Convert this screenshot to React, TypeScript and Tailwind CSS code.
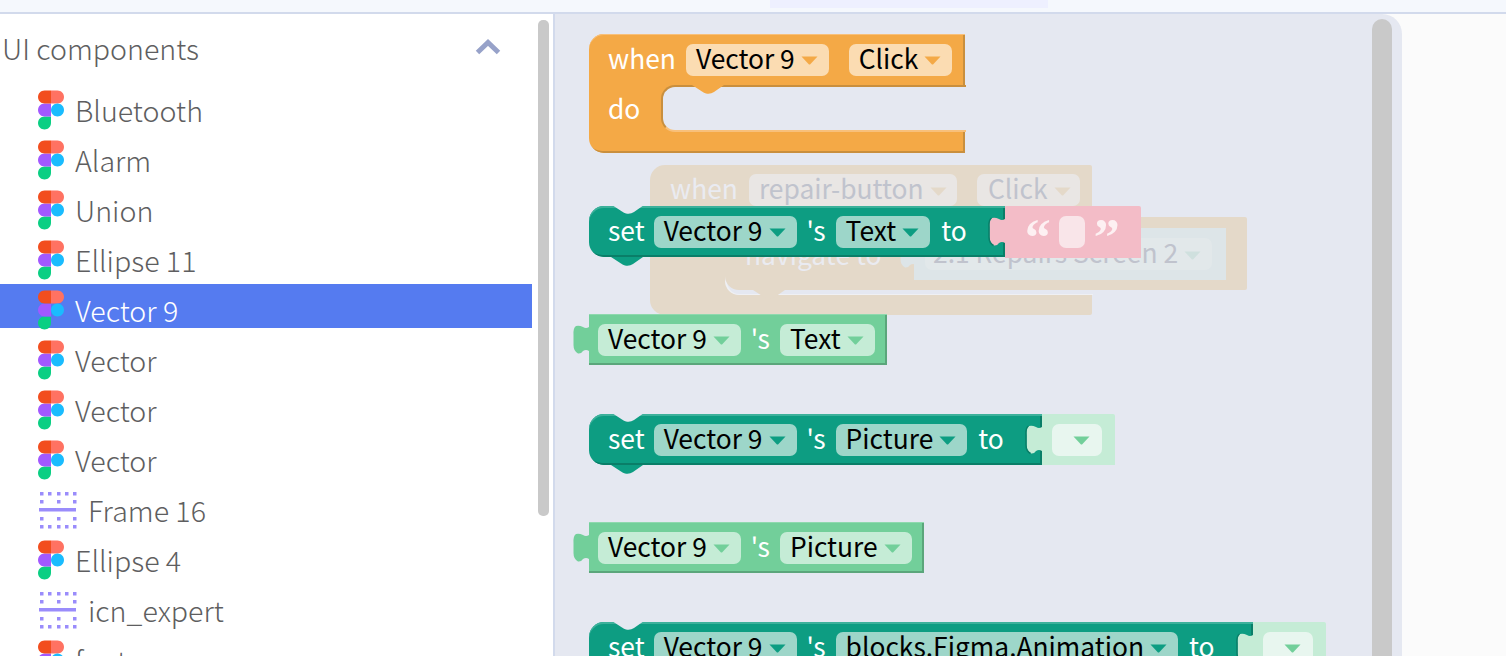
const blockFont = "font-['Noto_Sans_CJK_SC','Noto_Sans',sans-serif]"

type Tone = { base: string; field: string; arrow: string; edge: string }

const ORANGE: Tone = { base: 'bg-[#f4a946]', field: 'bg-[#fbdcb2]', arrow: '#f4a946', edge: 'shadow-[inset_0_1px_0_#f8c07a,inset_-2px_-2px_0_#c98f3e]' }
const TEAL: Tone = { base: 'bg-[#0d9d82]', field: 'bg-[#9dd6c9]', arrow: '#0d9d82', edge: 'shadow-[inset_0_2px_0_#3cb19b,inset_-2px_-2px_0_#0a7e68]' }
const GREEN: Tone = { base: 'bg-[#72cf9a]', field: 'bg-[#c5ecd6]', arrow: '#72cf9a', edge: 'shadow-[inset_0_1px_0_#8ed9ae,inset_-2px_-2px_0_#5ba67b]' }

function FigmaIcon() {
  return (
    <svg width="26" height="40" viewBox="0 0 200 300" className="shrink-0">
      <path d="M50 300c27.6 0 50-22.4 50-50v-50H50c-27.6 0-50 22.4-50 50s22.4 50 50 50z" fill="#0acf83" />
      <path d="M0 150c0-27.6 22.4-50 50-50h50v100H50c-27.6 0-50-22.4-50-50z" fill="#a259ff" />
      <path d="M0 50C0 22.4 22.4 0 50 0h50v100H50C22.4 100 0 77.6 0 50z" fill="#f24e1e" />
      <path d="M100 0h50c27.6 0 50 22.4 50 50s-22.4 50-50 50h-50V0z" fill="#ff7262" />
      <path d="M200 150c0 27.6-22.4 50-50 50s-50-22.4-50-50 22.4-50 50-50 50 22.4 50 50z" fill="#1abcfe" />
    </svg>
  )
}

function FrameIcon() {
  const cols = [1, 9, 18, 26, 34]
  return (
    <svg width="38" height="38" viewBox="0 0 38 38" className="shrink-0" fill="#9a8cfb">
      {[1, 34].map(y => cols.map(x => <rect key={`${x}-${y}`} x={x} y={y} width="3.5" height="3.5" />))}
      {[9, 26].map(y => [1, 18, 34].map(x => <rect key={`${x}-${y}`} x={x} y={y} width="3.5" height="3.5" />))}
      <rect x="0" y="17" width="37" height="3.5" />
    </svg>
  )
}

const items = [
  { name: 'Bluetooth', kind: 'figma' },
  { name: 'Alarm', kind: 'figma' },
  { name: 'Union', kind: 'figma' },
  { name: 'Ellipse 11', kind: 'figma' },
  { name: 'Vector 9', kind: 'figma', selected: true },
  { name: 'Vector', kind: 'figma' },
  { name: 'Vector', kind: 'figma' },
  { name: 'Vector', kind: 'figma' },
  { name: 'Frame 16', kind: 'frame' },
  { name: 'Ellipse 4', kind: 'figma' },
  { name: 'icn_expert', kind: 'frame' },
  { name: 'font', kind: 'figma' },
]

function Row({ name, kind, selected }: { name: string; kind: string; selected?: boolean }) {
  return (
    <li className={`h-[44px] mb-[6px] flex gap-[11px] pl-[38px] ${selected ? 'bg-[#557bf0]' : ''}`}>
      <div className={kind === 'figma' ? 'pt-[6px] h-[46px]' : 'pt-[7px] pl-[1px] h-[46px]'}>
        {kind === 'figma' ? <FigmaIcon /> : <FrameIcon />}
      </div>
      <span className={`pt-[6px] text-[28.6px] leading-[40px] font-light ${selected ? 'text-white' : 'text-[#5e5e60]'}`}>{name}</span>
    </li>
  )
}

function Arrow({ color, className = '' }: { color: string; className?: string }) {
  return (
    <svg width="17" height="9" viewBox="0 0 17 9" className={className}>
      <path d="M0.5 0.5h16l-7 7.5q-1 1-2 0z" fill={color} />
    </svg>
  )
}

function Field({ label, tone, className = '' }: { label: string; tone: Tone; className?: string }) {
  return (
    <div className={`h-[32px] rounded-[7px] flex items-center pl-[10px] pr-[11px] gap-[6px] text-black ${tone.field} ${className}`}>
      <span className="block text-[26.4px] leading-[28px] pb-[4px] whitespace-nowrap">{label}</span>
      <Arrow color={tone.arrow} className="mt-[2px]" />
    </div>
  )
}

function Word({ children, className = '' }: { children: string; className?: string }) {
  return <span className={`block text-[26.4px] leading-[28px] pb-[4px] text-white whitespace-nowrap ${className}`}>{children}</span>
}

// notch cut out of the top of a statement block, tab hanging from the bottom
function Notch({ color, className }: { color: string; className: string }) {
  return (
    <svg width="32" height="10" viewBox="0 0 32 10" className={`absolute ${className}`}>
      <path d="M0 0h32l-10 7q-3.5 2.5-8 1.5q-2-.5-4-2z" fill={color} />
    </svg>
  )
}

// puzzle tab on the left of a value block
function Socket({ color, shade, className }: { color: string; shade?: string; className: string }) {
  return (
    <svg width="18" height="30" viewBox="-1 0 18 30" className={`absolute ${className}`}>
      <path d="M16 2Q13 4 10 2Q6 0 3 1Q0 3 .5 10V20Q.5 26 5 28.5Q8 29 10 26Q13 24 16 26Z" fill={color} />
      {shade && <path d="M3 1Q0 3 .5 10V20Q.5 26 5 28.5" fill="none" stroke={shade} strokeWidth="1.5" transform="translate(-.5 0)" />}
    </svg>
  )
}

function SetBlock({ prop, className, socket }: { prop: string; className: string; socket: 'text' | 'picture' }) {
  return (
    <div className={`absolute flex ${blockFont} ${className}`}>
      <div className={`relative h-[51px] rounded-l-[15px] flex items-center pl-[19px] pr-[38px] gap-[9px] ${TEAL.base} ${TEAL.edge}`}>
        <Word>set</Word>
        <Field label="Vector 9" tone={TEAL} />
        <Word className="ml-[1px]">'s</Word>
        <Field label={prop} tone={TEAL} className="ml-[1px]" />
        <Word className="ml-[2px]">to</Word>
        <Notch color="#e5e8f1" className="left-[23px] -top-[1px]" />
        <Notch color={TEAL.arrow} className="left-[22px] top-[51px]" />
      </div>
      {socket === 'text' ? (
        <div className="relative w-[136px] h-[52px] bg-[#f3bcc7] flex items-start pl-[20px] gap-[9px] rounded-tr-[2px]">
          <span className="mt-[6px] w-[25px] h-[32px] font-['Liberation_Serif',serif] text-[52px] leading-[52px] text-[#fdf0f2] font-bold whitespace-nowrap">“</span>
          <div className="mt-[10px] w-[26px] h-[32px] rounded-[7px] bg-[#f9e5e9]" />
          <span className="mt-[6px] w-[25px] h-[32px] font-['Liberation_Serif',serif] text-[52px] leading-[52px] text-[#fdf0f2] font-bold whitespace-nowrap">”</span>
          <Socket color="#f3bcc7" shade="#0a7e68" className="-left-[17px] top-[11px]" />
        </div>
      ) : (
        <div className="relative w-[73px] h-[51px] bg-[#c5ecd6] flex items-center rounded-tr-[2px] pl-[10px]">
          <div className="w-[50px] h-[32px] rounded-[7px] bg-[#e8f6ef] flex items-center justify-center pl-[10px]">
            <Arrow color={GREEN.arrow} className="mt-[2px]" />
          </div>
          <Socket color="#c5ecd6" shade="#0a7e68" className="-left-[17px] top-[11px]" />
        </div>
      )}
    </div>
  )
}

function GetBlock({ prop, className }: { prop: string; className: string }) {
  return (
    <div className={`absolute h-[51px] flex items-center pl-[9px] pr-[12px] gap-[9px] ${blockFont} ${GREEN.base} ${GREEN.edge} ${className}`}>
      <Field label="Vector 9" tone={GREEN} />
      <Word className="ml-[1px]">'s</Word>
      <Field label={prop} tone={GREEN} className="ml-[1px]" />
      <Socket color="#72cf9a" className="-left-[17px] top-[11px]" />
    </div>
  )
}

function GhostField({ label, arrow, className = '' }: { label: string; arrow: string; className?: string }) {
  return (
    <div className={`h-[32px] rounded-[7px] flex items-center gap-[6px] ${className}`}>
      <span className="block text-[26.4px] leading-[28px] pb-[4px] text-[#c0c3cd] whitespace-nowrap">{label}</span>
      <Arrow color={arrow} className="mt-[2px]" />
    </div>
  )
}

export default function App() {
  return (
    <div className={`h-[656px] w-full overflow-hidden bg-[#fbfbfb] ${blockFont}`}>
      <div className="h-[14px] bg-[#f5f8fd] border-b-2 border-[#d2daec] pl-[770px]">
        <div className="w-[278px] h-[8px] bg-[#eef0ff]" />
      </div>
      <div className="flex h-[642px]">
        <aside className="relative w-[555px] shrink-0 bg-white border-r-2 border-[#d2daec] overflow-hidden">
          <div className="h-[70px] flex items-start pl-[2px] pr-[52px] justify-between">
            <span className="pt-[12px] text-[28.6px] leading-[44px] font-light text-[#5e5e60]">UI components</span>
            <svg width="26" height="16" viewBox="0 0 26 16" className="mt-[25px]">
              <path d="M2.5 13.5L13 3.5L23.5 13.5" fill="none" stroke="#97a2c9" strokeWidth="5" />
            </svg>
          </div>
          <ul className="w-[532px]">
            {items.map((it, i) => <Row key={i} {...it} />)}
          </ul>
          <div className="absolute left-[538px] top-[6px] w-[11px] h-[496px] rounded-[5px] bg-[#c9c9c9]" />
        </aside>

        <main className="relative w-[847px] shrink-0 bg-[#e5e8f1] rounded-tr-[20px] overflow-hidden">
          {/* ghost block being dragged behind the others */}
          <div className="absolute left-[95px] top-[151px] w-[442px] h-[150px] rounded-l-[15px] rounded-r-[2px] bg-[#e4d9c9] flex flex-col">
            <div className="h-[50px] flex items-center pl-[20px] gap-[11px]">
              <span className="block text-[26.4px] leading-[28px] pb-[4px] text-[#eaebf1]">when</span>
              <GhostField label="repair-button" arrow="#e4d9c9" className="bg-[#e9e6e4] pl-[10px] w-[208px]" />
              <GhostField label="Click" arrow="#e4d9c9" className="bg-[#e9e6e4] pl-[11px] w-[103px] ml-[9px]" />
            </div>
            <div className="mt-[2px] h-[78px] ml-[75px] -mr-[1px] bg-[#e5e8f1] rounded-l-[14px] border-b border-l-2 border-[#eff0f4]" />
          </div>
          <div className="absolute left-[170px] top-[203px] w-[522px] h-[73px] rounded-bl-[14px] rounded-r-[2px] bg-[#e4d9c9] flex items-center pl-[20px]">
            <span className="block text-[26.4px] leading-[28px] pb-[4px] text-[#eaebf1] mt-[4px] whitespace-nowrap">navigate to</span>
            <Notch color="#e4d9c9" className="left-[28px] top-[73px]" />
            <Socket color="#dde5e8" className="left-[174px] top-[22px]" />
            <div className="absolute left-[189px] top-[11px] w-[312px] h-[52px] bg-[#dde5e8] flex items-center pl-[11px]">
              <GhostField label="2.1 Repairs Screen 2" arrow="#cfe0de" className="bg-[#e2e8ea] pl-[8px] w-[287px]" />
            </div>
          </div>

          {/* orange event block */}
          <div className={`absolute left-[34px] top-[20px] w-[376px] h-[119px] rounded-l-[15px] flex flex-col ${ORANGE.base} ${ORANGE.edge}`}>
            <div className="h-[51px] flex items-center pl-[19px] gap-[9px]">
              <Word>when</Word>
              <Field label="Vector 9" tone={ORANGE} className="ml-[1px]" />
              <Field label="Click" tone={ORANGE} className="ml-[11px]" />
            </div>
            <div className="h-[47px] flex">
              <div className="w-[72px] pl-[19px] pt-[9px]"><Word>do</Word></div>
              <div className="flex-1 bg-[#e5e8f1] rounded-l-[14px] -mr-[1px] border-t-2 border-l-2 border-b-2 border-t-[#c98f3e] border-l-[#c98f3e] border-b-[#f8c07a]" />
            </div>
            <Notch color="#f4a946" className="left-[103px] top-[51px]" />
          </div>

          <SetBlock prop="Text" socket="text" className="left-[34px] top-[192px]" />
          <GetBlock prop="Text" className="left-[34px] top-[300px]" />
          <SetBlock prop="Picture" socket="picture" className="left-[34px] top-[400px]" />
          <GetBlock prop="Picture" className="left-[34px] top-[508px]" />
          <SetBlock prop="blocks.Figma.Animation" socket="picture" className="left-[34px] top-[608px]" />

          <div className="absolute left-[817px] top-[5px] w-[20px] h-[640px] rounded-t-[10px] bg-[#c9c9c9]" />
        </main>
      </div>
    </div>
  )
}
